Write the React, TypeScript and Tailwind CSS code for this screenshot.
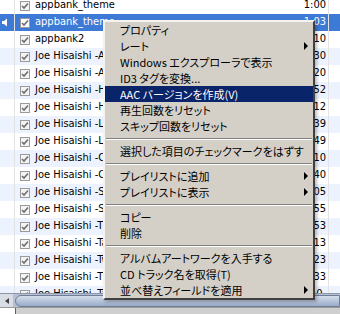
import React from "react";

type Row = { name: string; time: string };

const rows: Row[] = [
  { name: "appbank_theme", time: "1:00" },
  { name: "appbank_theme", time: "1:03" },
  { name: "appbank2", time: "4:10" },
  { name: "Joe Hisaishi -Ashitaka and San", time: "3:30" },
  { name: "Joe Hisaishi -Asian Dream Song", time: "4:20" },
  { name: "Joe Hisaishi -Hatsukoi", time: "3:52" },
  { name: "Joe Hisaishi -Hana-bi", time: "4:12" },
  { name: "Joe Hisaishi -Labyrinth", time: "5:39" },
  { name: "Joe Hisaishi -Lost Sheep", time: "3:49" },
  { name: "Joe Hisaishi -Cinema Nostalgia", time: "6:10" },
  { name: "Joe Hisaishi -Cartoon", time: "3:40" },
  { name: "Joe Hisaishi -Summer", time: "4:05" },
  { name: "Joe Hisaishi -Silencio", time: "2:55" },
  { name: "Joe Hisaishi -The Rain", time: "3:53" },
  { name: "Joe Hisaishi -Tango X.T.C.", time: "4:13" },
  { name: "Joe Hisaishi -Two of Us", time: "5:23" },
  { name: "Joe Hisaishi -The Wind Forest", time: "4:33" },
  { name: "Joe Hisaishi -Tasogare", time: "3:0-" },
];

type MenuItem =
  | { sep: true }
  | { sep?: false; label: string; sub?: boolean; active?: boolean };

const menu: MenuItem[] = [
  { label: "プロパティ" },
  { label: "レート", sub: true },
  { label: "Windows エクスプローラで表示" },
  { label: "ID3 タグを変換..." },
  { label: "AAC バージョンを作成(V)", active: true },
  { label: "再生回数をリセット" },
  { label: "スキップ回数をリセット" },
  { sep: true },
  { label: "選択した項目のチェックマークをはずす" },
  { sep: true },
  { label: "プレイリストに追加", sub: true },
  { label: "プレイリストに表示", sub: true },
  { sep: true },
  { label: "コピー" },
  { label: "削除" },
  { sep: true },
  { label: "アルバムアートワークを入手する" },
  { label: "CD トラック名を取得(T)" },
  { label: "並べ替えフィールドを適用", sub: true },
];

const Check = ({ selected }: { selected: boolean }) => (
  <svg width="10" height="10" viewBox="0 0 10 10" className="shrink-0">
    <rect x="0.5" y="0.5" width="9" height="9" fill={selected ? "#ffffff" : "#f4f4f4"} stroke="#9a9a9a" />
    <path d="M2 5 L4 7 L8 2.5" fill="none" stroke="#6e6e6e" strokeWidth="1.6" />
  </svg>
);

const Speaker = () => (
  <svg width="8" height="9" viewBox="0 0 8 9">
    <path d="M0 3 H2 L5 0.5 V8.5 L2 6 H0 Z" fill="#ffffff" />
  </svg>
);

const App = () => {
  return (
    <div className="relative w-[340px] h-[314px] overflow-hidden bg-white flex flex-col font-['DejaVu_Sans_Condensed','DejaVu_Sans',sans-serif]">
      <div className="flex-1 overflow-hidden">
        <div className="-mt-[3px] flex flex-col">
          {rows.map((r, i) => {
            const sel = i === 1;
            const bg = sel ? "bg-[#3c7ad6]" : i % 2 === 1 ? "bg-[#edf3fe]" : "bg-white";
            return (
              <div key={i} className={`flex h-[17px] items-center ${bg}`}>
                <div className="w-[15px] h-full flex items-center pl-[2px] border-r border-[#e3e3e3]">
                  {sel && <Speaker />}
                </div>
                <div className="flex-1 flex items-center gap-[5px] pl-[5px] min-w-0 overflow-hidden">
                  <Check selected={sel} />
                  <span className={`text-[11px] whitespace-nowrap ${sel ? "text-white" : "text-black"}`}>{r.name}</span>
                </div>
                <div className={`w-[40px] pr-[2px] text-right text-[11px] ${sel ? "text-white" : "text-black"}`}>{r.time}</div>
                <div className="w-[12px] h-full border-l border-[#e3e3e3]" />
              </div>
            );
          })}
        </div>
      </div>

      {/* horizontal scrollbar */}
      <div className="h-[14px] flex items-center bg-[#b7c0d1] border-t border-[#8d97ab]">
        <div className="w-[13px] h-full flex items-center justify-center bg-[#d8dde6]">
          <div className="w-0 h-0 border-y-[3px] border-y-transparent border-r-[4px] border-r-[#404040]" />
        </div>
        <div className="flex-1 h-[12px] ml-[2px] rounded-l-full border border-[#6f7d98] bg-gradient-to-b from-[#d5deec] to-[#9aabc7]" />
      </div>

      {/* status strip */}
      <div className="h-[7px] flex bg-[#cfcfcf] border-t border-[#9a9a9a]">
        <div className="w-[16px] h-full bg-white border-r border-[#606060]" />
      </div>

      {/* context menu */}
      <div className="absolute left-[103px] top-[20px] w-[212px] h-[280px] bg-[#d4d0c8] border-2 border-t-[#f4f3ef] border-l-[#f4f3ef] border-r-[#404040] border-b-[#404040] shadow-[2px_2px_3px_rgba(0,0,0,0.25)] flex flex-col font-['Noto_Sans_CJK_JP',sans-serif] [font-feature-settings:'palt'] text-[11px]">
        {menu.map((m, i) =>
          m.sep ? (
            <div key={i} className="h-[9px] flex flex-col justify-center px-[1px]">
              <div className="h-[1px] bg-[#808080]" />
              <div className="h-[1px] bg-white" />
            </div>
          ) : (
            <div
              key={i}
              className={`h-[16px] flex items-center pl-[15px] pr-[5px] ${m.active ? "bg-[#0a246a] text-white" : "text-black"}`}
            >
              <span className="flex-1 whitespace-nowrap leading-none">{m.label}</span>
              {m.sub && (
                <div className={`w-0 h-0 border-y-[4px] border-y-transparent border-l-[4px] ${m.active ? "border-l-white" : "border-l-black"}`} />
              )}
            </div>
          )
        )}
      </div>
    </div>
  );
};

export default App;
